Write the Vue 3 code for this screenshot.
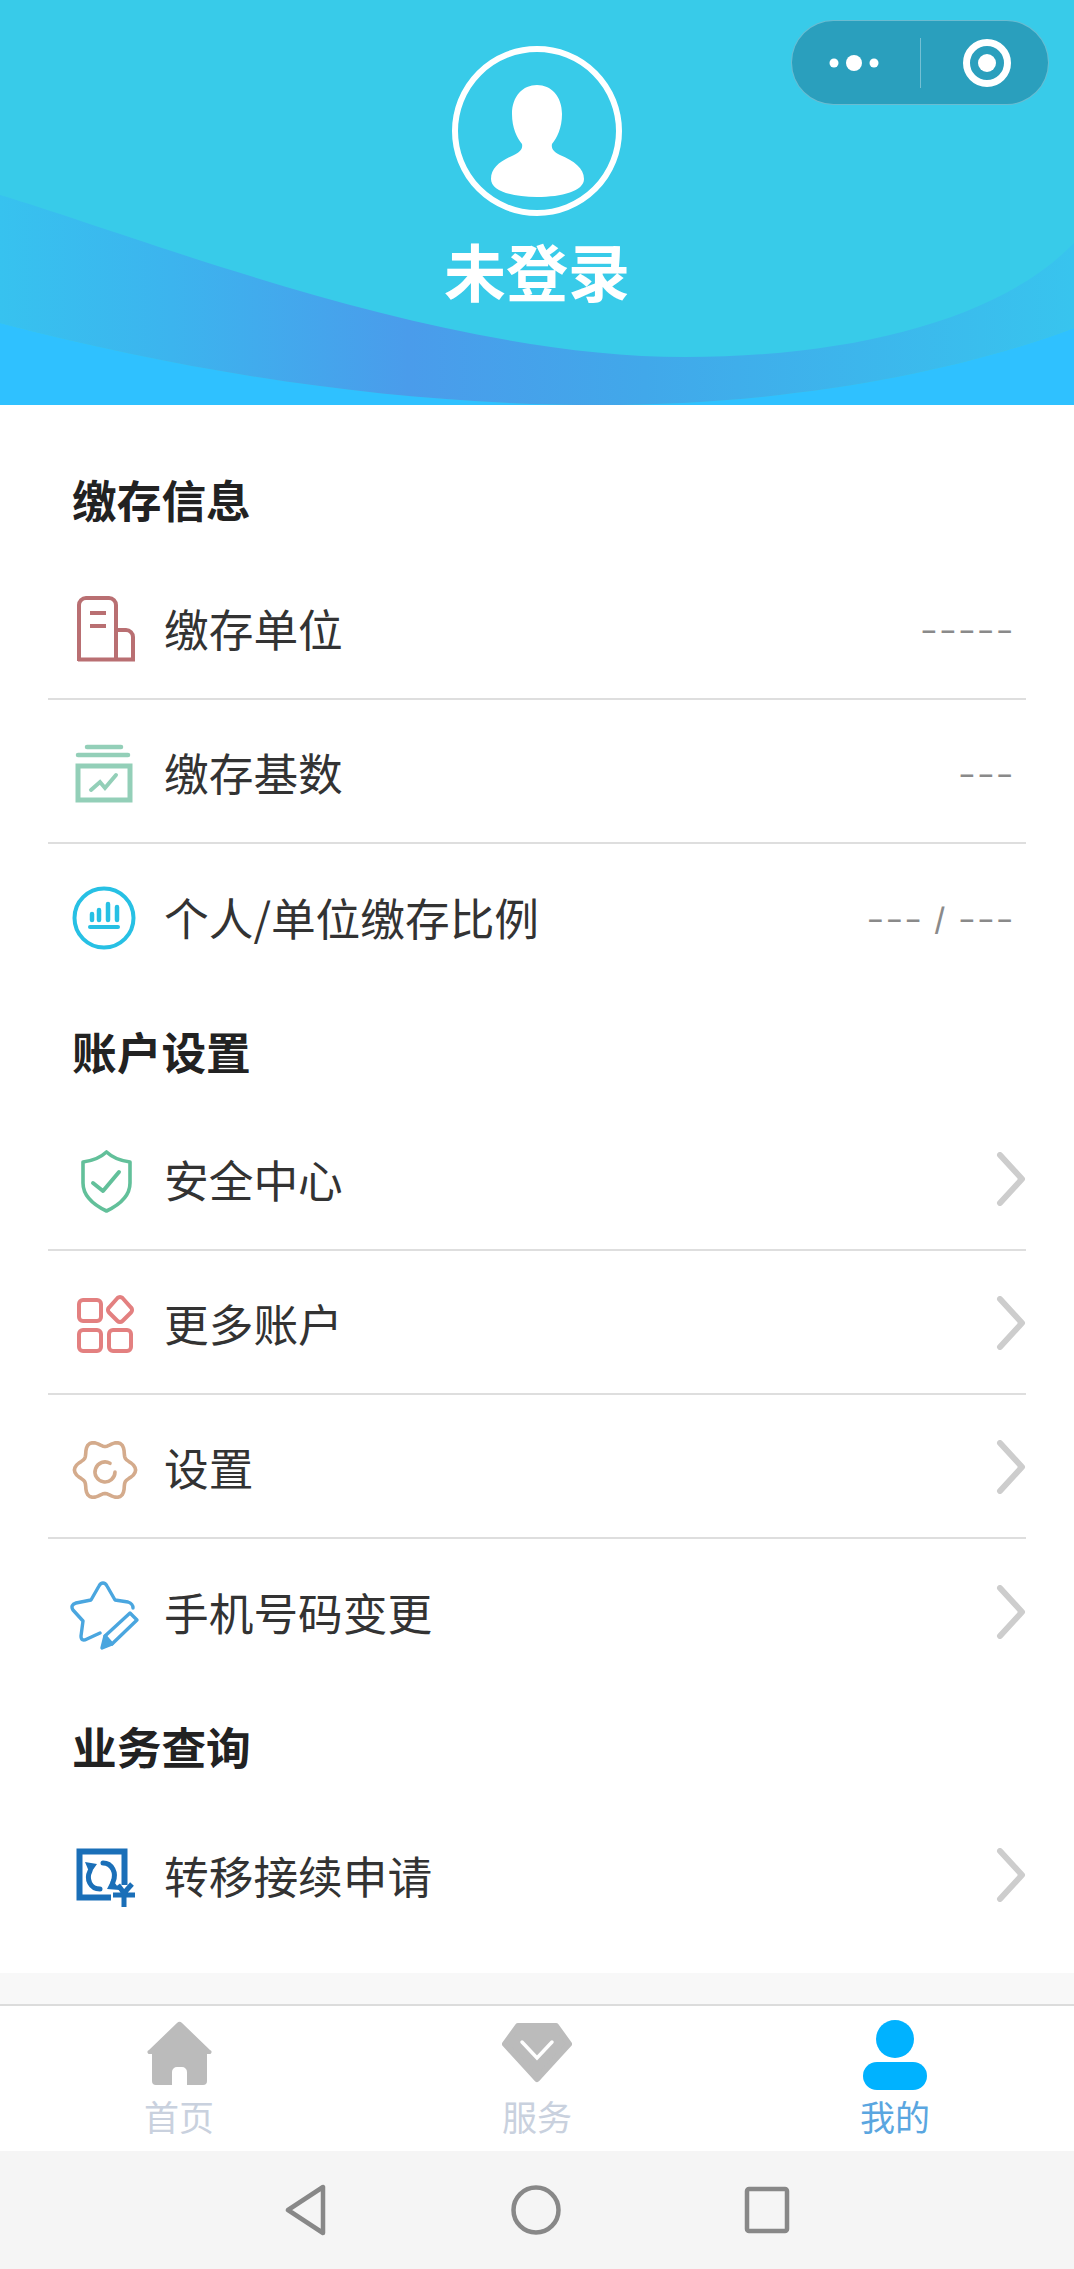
<script setup>
const gearPoints = []
for (let i = 0; i < 72; i++) {
  const a = (i / 72) * Math.PI * 2
  const r = 27 + 3.6 * Math.cos(6 * a)
  gearPoints.push((35 + r * Math.cos(a)).toFixed(1) + ',' + (35 + r * Math.sin(a)).toFixed(1))
}
const gear = gearPoints.join(' ')

const infoRows = [
  { icon: 'building', label: '缴存单位', value: '–––––' },
  { icon: 'chart', label: '缴存基数', value: '–––' },
  { icon: 'ratio', label: '个人/单位缴存比例', value: '––– / –––' },
]
const accountRows = [
  { icon: 'shield', label: '安全中心' },
  { icon: 'apps', label: '更多账户' },
  { icon: 'gear', label: '设置' },
  { icon: 'star', label: '手机号码变更' },
]
</script>

<template>
  <div class="page">
    <header class="hero">
      <svg class="waves" viewBox="0 0 1074 405" preserveAspectRatio="none">
        <defs>
          <linearGradient id="band" x1="0" y1="0" x2="1" y2="0">
            <stop offset="0" stop-color="#37c2ef" />
            <stop offset="0.16" stop-color="#3cb4ee" />
            <stop offset="0.38" stop-color="#4a9ceb" />
            <stop offset="0.6" stop-color="#41a8ea" />
            <stop offset="1" stop-color="#38c4ee" />
          </linearGradient>
        </defs>
        <path d="M0 323 C200 375 400 405 600 405 C780 405 950 375 1074 328 V405 H0 Z" fill="#2fc1ff" />
        <path d="M0 195 C150 240 440 357 685 357 C850 357 1000 320 1074 243 V328 C950 375 780 405 600 405 C400 405 200 375 0 323 Z" fill="url(#band)" />
      </svg>
      <div class="capsule">
        <svg width="80" height="30" viewBox="0 0 80 30">
          <circle cx="15" cy="15" r="4.5" fill="#fff" />
          <circle cx="35" cy="15" r="8" fill="#fff" />
          <circle cx="55" cy="15" r="4.5" fill="#fff" />
        </svg>
        <i class="capsule-line"></i>
        <svg width="50" height="50" viewBox="0 0 50 50">
          <circle cx="25" cy="25" r="20.5" fill="none" stroke="#fff" stroke-width="7" />
          <circle cx="25" cy="25" r="9" fill="#fff" />
        </svg>
      </div>
      <svg class="avatar" width="170" height="170" viewBox="0 0 170 170">
        <circle cx="85" cy="85" r="82" fill="none" stroke="#fff" stroke-width="6" />
        <path d="M85 39 C71 39 60 50 60 68 C60 82 65 92 70 98 C71 103 68 106 62 109 C48 115 39 122 39 133 C39 145 60 151 85 151 C110 151 132 145 132 133 C132 122 122 115 108 109 C102 106 99 103 100 98 C105 92 110 82 110 68 C110 50 99 39 85 39 Z" fill="#fff" />
      </svg>
      <div class="hero-name">未登录</div>
    </header>

    <main class="content">
      <h2 class="title first">缴存信息</h2>
      <div v-for="row in infoRows" :key="row.label" class="row">
        <svg class="icon" viewBox="0 0 70 70" fill="none">
          <g v-if="row.icon === 'building'" stroke="#b96f72" stroke-width="4">
            <path d="M9 65 V9 a7 7 0 0 1 7 -7 H39 a7 7 0 0 1 7 7 V65" />
            <path d="M46 34 H56 a7 7 0 0 1 7 7 V63.5 H8" />
            <path d="M20 17 H36 M20 30 H36" />
          </g>
          <g v-else-if="row.icon === 'chart'" stroke="#93cfb8">
            <path d="M17 7 H51" stroke-width="4.5" stroke-linecap="round" />
            <path d="M8 15 H58" stroke-width="4.5" stroke-linecap="round" />
            <rect x="8" y="26" width="52" height="34" stroke-width="5" />
            <path d="M21 50 L30 42 L35 48 L46 35" stroke-width="4" stroke-linecap="round" />
          </g>
          <g v-else stroke="#27c0e4" stroke-linecap="round">
            <circle cx="34" cy="33" r="29.5" stroke-width="4" />
            <path d="M22 29 V35 M29 25 V35 M38 19 V35 M47 22 V35" stroke-width="4.5" />
            <path d="M20 42 H48" stroke-width="4" />
          </g>
        </svg>
        <span class="label">{{ row.label }}</span>
        <span class="value">{{ row.value }}</span>
      </div>

      <h2 class="title">账户设置</h2>
      <div v-for="row in accountRows" :key="row.label" class="row">
        <svg class="icon" viewBox="0 0 70 70" fill="none">
          <g v-if="row.icon === 'shield'" stroke="#62c09a" stroke-width="3.6" stroke-linejoin="round" stroke-linecap="round">
            <path d="M36.5 5 C30 11 22 14 13 15 V36 C13 50 26 59 36.5 64 C47 59 60 50 60 36 V15 C51 14 43 11 36.5 5 Z" />
            <path d="M23 36 L33 44 L49 25" stroke-width="4" />
          </g>
          <g v-else-if="row.icon === 'apps'" stroke="#e38080" stroke-width="4">
            <rect x="9" y="9" width="22" height="21" rx="4" />
            <rect x="9" y="39" width="22" height="21" rx="4" />
            <rect x="39" y="39" width="22" height="21" rx="4" />
            <path d="M47.5 7 a3.5 3.5 0 0 1 5 0 L61 16.5 a3.5 3.5 0 0 1 0 5 L52.5 30 a3.5 3.5 0 0 1 -5 0 L39 21.5 a3.5 3.5 0 0 1 0 -5 Z" />
          </g>
          <g v-else-if="row.icon === 'gear'" stroke="#d4ab8c" stroke-width="3.6">
            <polygon :points="gear" stroke-linejoin="round" />
            <path d="M40 28.3 A10 10 0 1 0 45 37" stroke-linecap="round" />
          </g>
          <g v-else stroke="#4aa6df" stroke-width="3.4" stroke-linecap="round" stroke-linejoin="round">
            <path d="M63 28 C63 25 61 23 58 22 L45 20 L37 6 C35 2 31 2 29 6 L21 20 L6 23 C2 24 1 27 3 30 L13 41 L11 56 C11 60 13 61 17 59 L30 53" />
            <path d="M60 33 L67 40 L42 64 L35 56 Z" />
            <path d="M35 56 L32 68 L42 64 Z" fill="#4aa6df" />
          </g>
        </svg>
        <span class="label">{{ row.label }}</span>
        <svg class="chevron" width="30" height="54" viewBox="0 0 30 54" fill="none">
          <path d="M4 3 L26 27 L4 51" stroke="#cdcdcd" stroke-width="6" stroke-linecap="round" stroke-linejoin="round" />
        </svg>
      </div>

      <h2 class="title">业务查询</h2>
      <div class="row last">
        <svg class="icon" viewBox="0 0 70 70" fill="none">
          <path d="M54.5 42 V8.5 H9.5 V54.5 H41" stroke="#1a6fb8" stroke-width="6" />
          <path d="M30 46 C20 46 16 36 20 28 M33 20 C42 20 47 30 43 39" stroke="#1a6fb8" stroke-width="5" stroke-linecap="round" />
          <path d="M15 19 L27 21 L20 31 Z M37 46 L50 47 L42 36 Z" fill="#1a6fb8" />
          <path d="M48 42 L54 50 L62 41 M43 52 H65 M54 50 V64" stroke="#1a6fb8" stroke-width="5" />
        </svg>
        <span class="label">转移接续申请</span>
        <svg class="chevron" width="30" height="54" viewBox="0 0 30 54" fill="none">
          <path d="M4 3 L26 27 L4 51" stroke="#cdcdcd" stroke-width="6" stroke-linecap="round" stroke-linejoin="round" />
        </svg>
      </div>
    </main>

    <div class="band"></div>

    <nav class="tabs">
      <div class="tab">
        <svg width="70" height="70" viewBox="0 0 70 70">
          <path d="M33 3 a3.5 3.5 0 0 1 5 0 L66 30 a2 2 0 0 1 -1 4 H63 V61 a4 4 0 0 1 -4 4 H43 V52 a5 5 0 0 0 -5 -5 H33 a5 5 0 0 0 -5 5 V65 H12 a4 4 0 0 1 -4 -4 V34 H6 a2 2 0 0 1 -1 -4 Z" fill="#bbbbbb" />
        </svg>
        <span>首页</span>
      </div>
      <div class="tab">
        <svg width="70" height="70" viewBox="0 0 70 70">
          <path d="M16 6 H54 L67 24 L35 59 L3 24 Z" fill="#bbbbbb" stroke="#bbbbbb" stroke-width="6" stroke-linejoin="round" />
          <path d="M20 22 L35 38 L50 22" fill="none" stroke="#fff" stroke-width="3.5" stroke-linecap="round" />
        </svg>
        <span>服务</span>
      </div>
      <div class="tab active">
        <svg width="70" height="70" viewBox="0 0 70 70">
          <ellipse cx="35" cy="19" rx="19" ry="19" fill="#00b2ff" />
          <rect x="3" y="42" width="64" height="28" rx="14" fill="#00b2ff" />
        </svg>
        <span>我的</span>
      </div>
    </nav>

    <div class="sysbar">
      <svg width="44" height="52" viewBox="0 0 44 52" fill="none">
        <path d="M39 3 V49 L4 26 Z" stroke="#888" stroke-width="4.5" stroke-linejoin="round" />
      </svg>
      <svg width="52" height="52" viewBox="0 0 52 52" fill="none">
        <circle cx="26" cy="26" r="22.5" stroke="#888" stroke-width="4.5" />
      </svg>
      <svg width="46" height="48" viewBox="0 0 46 48" fill="none">
        <rect x="3" y="3" width="40" height="42" rx="2" stroke="#888" stroke-width="4.5" />
      </svg>
    </div>
  </div>
</template>

<style>
html,
body {
  margin: 0;
  background: #fff;
}
</style>

<style scoped>
.page {
  width: 1074px;
  height: 2269px;
  display: flex;
  flex-direction: column;
  overflow: hidden;
  font-family: "Noto Sans CJK SC", "Noto Sans", sans-serif;
  background: #fff;
}
.hero {
  position: relative;
  height: 405px;
  flex: none;
  background: #38cbe9;
  display: flex;
  flex-direction: column;
  align-items: center;
}
.waves {
  position: absolute;
  inset: 0;
  width: 100%;
  height: 100%;
}
.capsule {
  position: absolute;
  top: 20px;
  left: 791px;
  width: 258px;
  height: 85px;
  box-sizing: border-box;
  border: 1.5px solid rgba(255, 255, 255, 0.3);
  border-radius: 43px;
  background: #2a9fbd;
  display: flex;
  align-items: center;
  padding-left: 27px;
}
.capsule-line {
  width: 1px;
  height: 50px;
  background: rgba(255, 255, 255, 0.35);
  margin: 0 41px 0 21px;
}
.avatar {
  position: relative;
  margin-top: 46px;
}
.hero-name {
  position: relative;
  margin-top: 15px;
  font-size: 62px;
  line-height: 78px;
  font-weight: 700;
  color: #fff;
}
.content {
  flex: none;
  height: 1568px;
  box-sizing: border-box;
  padding: 0 48px;
}
.title {
  margin: 0;
  padding: 33px 24px 26px;
  font-size: 44.7px;
  line-height: 60px;
  font-weight: 700;
  color: #222;
}
.title.first {
  padding-top: 64px;
  padding-bottom: 27px;
}
.row {
  height: 144px;
  box-sizing: border-box;
  padding-top: 2px;
  display: flex;
  align-items: center;
  border-bottom: 2px solid #dedede;
}
.row:has(+ .title),
.row.last {
  border-bottom: none;
}
.icon {
  width: 70px;
  height: 70px;
  flex: none;
  margin: 5px 24px 0 22px;
}
.label {
  flex: 1;
  font-size: 44.7px;
  line-height: 60px;
  color: #333;
}
.value {
  font-size: 28px;
  font-weight: 700;
  letter-spacing: 3.7px;
  color: #8a8a8a;
  margin-right: 10px;
}
.chevron {
  flex: none;
}
.band {
  flex: none;
  height: 33px;
  background: #f8f8f8;
  border-bottom: 2px solid #dcdcdc;
  box-sizing: border-box;
}
.tabs {
  flex: none;
  height: 145px;
  display: flex;
  background: #fff;
}
.tab {
  flex: 1;
  display: flex;
  flex-direction: column;
  align-items: center;
  padding-top: 14px;
  font-size: 35px;
  line-height: 44px;
  color: #c9d1de;
}
.tab span {
  margin-top: 4px;
}
.tab.active {
  color: #5aa6e0;
}
.sysbar {
  flex: 1;
  background: #f5f5f5;
  display: flex;
  align-items: center;
  justify-content: center;
  gap: 182px;
}
</style>
